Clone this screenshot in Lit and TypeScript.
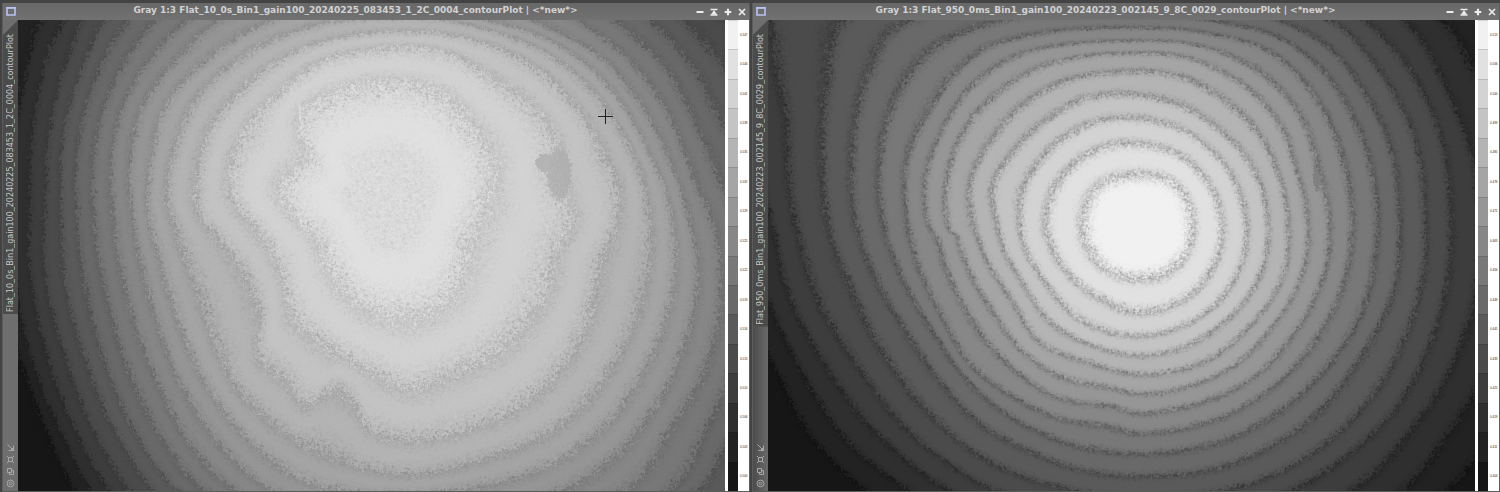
import { LitElement, html, css, svg } from "lit";
import { customElement, property } from "lit/decorators.js";

type Ring = number[][];

interface FieldSpec {
  // size of the grid in which the contour points are given
  grid: [number, number];
  center: [number, number];
  firstLevel: number;
  noise: number;
  lineWidth: number;
  lineDepth: number;
  coreDepth: number;
  seed: number;
  rings: Ring[];
  // darker patches: x, y, radius x, radius y, depth in gray values
  patches: number[][];
}

const SHADES = [241, 225, 211, 196, 180, 165, 150, 135, 120, 105, 90, 75, 61, 47, 34, 22];

const LEFT: FieldSpec = {
  grid: [1562, 1416],
  center: [820, 540],
  firstLevel: 1,
  noise: 0.19,
  lineWidth: 0.27,
  lineDepth: 26,
  coreDepth: 0.77,
  seed: 11,
  patches: [[1195, 465, 26, 75, 20], [1165, 435, 22, 28, 16]],
  rings: [
    [[830,190],[930,225],[1000,320],[1040,420],[1030,560],[990,680],[940,850],[850,900],[760,870],[710,790],[660,660],[600,580],[580,500],[640,420],[620,290],[700,220]],
    [[850,85],[940,100],[1060,190],[1150,290],[1190,390],[1180,430],[1200,530],[1225,600],[1190,700],[1160,830],[1080,970],[950,1070],[870,1110],[780,1060],[680,980],[610,900],[580,760],[530,640],[470,530],[470,450],[510,320],[580,220],[680,120],[760,95]],
    [[850,40],[960,50],[1110,120],[1210,230],[1290,400],[1325,500],[1320,620],[1280,750],[1260,900],[1200,1050],[1080,1190],[940,1250],[850,1265],[770,1225],[740,1140],[690,1110],[640,1165],[590,1080],[530,1010],[540,900],[500,760],[430,640],[400,600],[395,480],[420,340],[490,220],[560,140],[700,60]],
    [[830,-5],[1000,20],[1160,100],[1270,220],[1340,360],[1385,520],[1395,680],[1375,850],[1310,1050],[1200,1220],[1060,1310],[860,1370],[740,1340],[620,1270],[500,1140],[440,1000],[400,830],[350,640],[330,560],[350,370],[400,230],[500,110],[600,45]],
    [[830,-60],[1020,0],[1180,70],[1300,200],[1380,370],[1430,520],[1450,660],[1440,850],[1380,1060],[1290,1230],[1160,1350],[1000,1410],[860,1430],[650,1400],[510,1270],[420,1110],[360,940],[320,760],[290,620],[295,420],[330,250],[420,120],[520,30]],
    [[830,-120],[1140,10],[1290,120],[1380,270],[1440,430],[1480,600],[1500,760],[1470,980],[1400,1180],[1320,1310],[1200,1418],[860,1500],[560,1418],[440,1270],[360,1100],[300,880],[260,650],[245,450],[280,250],[360,110],[440,10]],
    [[830,-190],[1240,10],[1360,140],[1440,300],[1490,480],[1540,640],[1550,800],[1530,1000],[1440,1230],[1340,1418],[860,1580],[480,1418],[380,1280],[310,1100],[250,880],[215,650],[205,450],[235,250],[310,90],[370,10]],
    [[830,-260],[1320,10],[1430,150],[1500,330],[1560,520],[1610,800],[1530,1200],[1440,1418],[860,1660],[410,1418],[320,1270],[250,1080],[200,860],[170,640],[165,450],[195,250],[255,90],[300,10]],
    [[830,-330],[1400,10],[1490,150],[1560,330],[1680,800],[1560,1290],[1500,1418],[860,1740],[350,1418],[260,1250],[190,1030],[150,820],[130,600],[130,400],[160,220],[240,10]],
    [[830,-390],[1470,10],[1550,130],[1640,330],[1750,800],[1580,1418],[860,1820],[300,1418],[210,1230],[150,1030],[105,800],[95,580],[100,350],[140,150],[190,10]],
    [[830,-450],[1560,0],[1720,330],[1820,800],[1700,1418],[860,1900],[245,1418],[160,1220],[100,1000],[60,780],[60,550],[70,330],[110,120],[140,10]],
    [[830,-520],[1650,0],[1900,800],[1800,1418],[860,1980],[200,1418],[120,1220],[60,1000],[30,800],[25,550],[35,300],[100,10]],
    [[830,-590],[1750,0],[2000,800],[1900,1418],[860,2060],[160,1418],[90,1230],[20,980],[-10,750],[-20,500],[10,220],[50,10]],
    [[830,-660],[1850,0],[2100,800],[2000,1418],[860,2140],[125,1418],[60,1230],[5,1020],[-60,700],[-60,300],[-10,0]],
  ],
};

const RIGHT: FieldSpec = {
  grid: [1562, 1416],
  center: [820, 620],
  firstLevel: 0,
  noise: 0.13,
  lineWidth: 0.17,
  lineDepth: 58,
  coreDepth: 0.55,
  seed: 47,
  patches: [[1212, 470, 9, 50, 22]],
  rings: [
    [[820,468],[870,476],[905,505],[930,560],[937,620],[930,690],[900,745],[860,775],[820,782],[770,772],[730,740],[705,690],[695,620],[703,550],[730,500],[770,476]],
    [[810,375],[900,405],[975,500],[1003,620],[985,740],[925,840],[820,885],[720,830],[640,730],[612,600],[630,510],[680,430],[740,385]],
    [[800,298],[900,325],[990,410],[1040,520],[1057,640],[1035,770],[950,900],[820,955],[700,915],[610,790],[555,620],[560,520],[590,445],[660,350],[730,308]],
    [[800,228],[900,255],[1000,340],[1075,460],[1103,610],[1085,770],[1000,920],[900,995],[820,1013],[720,985],[630,920],[560,790],[505,620],[495,500],[540,400],[620,300],[700,240]],
    [[800,158],[900,170],[1000,235],[1090,360],[1130,480],[1148,620],[1130,800],[1060,930],[960,1035],[820,1070],[700,1030],[610,985],[540,850],[480,720],[450,600],[445,500],[490,370],[570,250],[660,185]],
    [[800,103],[920,115],[1040,190],[1130,320],[1165,450],[1190,600],[1175,780],[1110,930],[1010,1060],[900,1115],[820,1128],[740,1105],[660,1085],[570,1010],[500,890],[450,780],[418,655],[400,640],[395,480],[425,350],[500,230],[600,145],[700,112]],
    [[800,67],[940,78],[1060,140],[1160,260],[1215,450],[1240,620],[1220,800],[1160,950],[1060,1090],[940,1160],[820,1187],[760,1165],[640,1140],[520,1025],[430,860],[380,690],[350,600],[350,460],[390,320],[450,200],[560,105],[680,75]],
    [[780,28],[960,42],[1110,100],[1210,240],[1265,400],[1287,560],[1280,740],[1225,930],[1120,1100],[1000,1200],[820,1247],[750,1225],[640,1200],[530,1130],[450,1050],[380,890],[320,700],[303,560],[305,430],[350,290],[410,170],[480,90],[600,45]],
    [[780,-15],[1000,12],[1120,52],[1220,150],[1300,320],[1340,500],[1343,680],[1320,850],[1240,1040],[1130,1180],[1000,1270],[830,1308],[680,1285],[540,1200],[450,1100],[370,950],[300,790],[255,620],[245,440],[265,290],[320,150],[400,60],[500,12]],
    [[780,-70],[1000,-40],[1140,12],[1240,90],[1320,230],[1380,420],[1393,600],[1380,820],[1310,1010],[1230,1160],[1120,1280],[980,1355],[850,1375],[700,1360],[570,1295],[480,1230],[380,1090],[300,930],[230,760],[190,590],[185,400],[220,170],[280,25],[400,-30]],
    [[780,-130],[1100,-60],[1250,10],[1340,140],[1420,330],[1450,560],[1445,780],[1400,980],[1320,1160],[1200,1310],[1050,1405],[850,1440],[650,1412],[500,1340],[380,1220],[270,1040],[190,830],[140,660],[120,440],[130,200],[160,10],[300,-90]],
    [[780,-200],[1200,-80],[1320,10],[1420,160],[1480,330],[1505,560],[1500,780],[1460,980],[1380,1180],[1290,1300],[1150,1420],[850,1510],[500,1418],[350,1290],[200,1050],[110,850],[60,620],[40,300],[10,50],[0,-50]],
    [[780,-280],[1300,-100],[1410,10],[1500,220],[1560,440],[1575,650],[1550,900],[1480,1120],[1400,1270],[1290,1418],[850,1580],[400,1418],[250,1260],[130,1050],[50,850],[5,600],[-40,300],[-60,0]],
    [[780,-360],[1490,10],[1560,160],[1620,500],[1620,900],[1500,1250],[1400,1418],[850,1650],[310,1418],[180,1280],[80,1080],[10,880],[-60,500],[-100,0]],
    [[780,-440],[1600,0],[1700,500],[1650,1100],[1500,1418],[850,1720],[215,1418],[90,1250],[10,1040],[-120,600],[-150,0]],
  ],
};

const STEPS = 1440;

// radius of a closed ring for every direction, eased between the given points
function polar(ring: Ring, cx: number, cy: number): Float32Array {
  const pts = ring
    .map(([x, y]) => ({ a: Math.atan2(y - cy, x - cx), r: Math.hypot(x - cx, y - cy) }))
    .sort((p, q) => p.a - q.a);
  const n = pts.length;
  const at = (i: number) => {
    const turn = Math.floor(i / n);
    const p = pts[i - turn * n];
    return { a: p.a + turn * 2 * Math.PI, r: p.r };
  };
  const out = new Float32Array(STEPS + 1);
  for (let s = 0; s <= STEPS; s++) {
    const a = -Math.PI + (s / STEPS) * 2 * Math.PI;
    let i = -1;
    while (at(i + 1).a <= a) i++;
    const p0 = at(i - 1), p1 = at(i), p2 = at(i + 1), p3 = at(i + 2);
    const h = p2.a - p1.a || 1e-6;
    const t = (a - p1.a) / h;
    const m1 = ((p2.r - p0.r) / (p2.a - p0.a || 1e-6)) * h;
    const m2 = ((p3.r - p1.r) / (p3.a - p1.a || 1e-6)) * h;
    const t2 = t * t, t3 = t2 * t;
    out[s] = (2 * t3 - 3 * t2 + 1) * p1.r + (t3 - 2 * t2 + t) * m1 + (3 * t2 - 2 * t3) * p2.r + (t3 - t2) * m2;
  }
  return out;
}

// sensor grain: white noise softened over neighbouring pixels, about -1..1
function grain(w: number, h: number, rnd: () => number): Float32Array {
  const raw = new Float32Array(w * h);
  for (let i = 0; i < raw.length; i++) raw[i] = (rnd() + rnd() - 1) * 1.1;
  const out = new Float32Array(w * h);
  for (let y = 0; y < h; y++) {
    const up = Math.max(0, y - 1) * w, row = y * w, down = Math.min(h - 1, y + 1) * w;
    for (let x = 0; x < w; x++) {
      const l = Math.max(0, x - 1), r = Math.min(w - 1, x + 1);
      out[row + x] = raw[row + x] * 0.8 + (raw[row + l] + raw[row + r] + raw[up + x] + raw[down + x]) * 0.4;
    }
  }
  return out;
}

function paint(canvas: HTMLCanvasElement, spec: FieldSpec) {
  const w = (canvas.width = Math.max(1, canvas.clientWidth));
  const h = (canvas.height = Math.max(1, canvas.clientHeight));
  const ctx = canvas.getContext("2d")!;
  const image = ctx.createImageData(w, h);
  const [cx, cy] = spec.center;
  const radii = spec.rings.map((r) => polar(r, cx, cy));
  const count = radii.length;
  let state = spec.seed;
  const rnd = () => {
    state = (state + 0x6d2b79f5) | 0;
    let t = Math.imul(state ^ (state >>> 15), 1 | state);
    t = (t + Math.imul(t ^ (t >>> 7), 61 | t)) ^ t;
    return ((t ^ (t >>> 14)) >>> 0) / 4294967296;
  };
  const shift = grain(w, h, rnd);
  const speckle = grain(w, h, rnd);
  for (let y = 0; y < h; y++) {
    for (let x = 0; x < w; x++) {
      const gx = (x / w) * spec.grid[0];
      const gy = (y / h) * spec.grid[1] + 6;
      const r = Math.hypot(gx - cx, gy - cy);
      const s = Math.round(((Math.atan2(gy - cy, gx - cx) + Math.PI) / (2 * Math.PI)) * STEPS);
      let k = 0;
      while (k < count && radii[k][s] < r) k++;
      let u: number;
      if (k === 0) u = -Math.min(spec.coreDepth, (1 - r / radii[0][s]) * 1.3);
      else if (k === count) u = count - 1 + Math.min(0.5, (r - radii[count - 1][s]) / 60);
      else u = k - 1 + (r - radii[k - 1][s]) / (radii[k][s] - radii[k - 1][s]);
      const i = y * w + x;
      const v = u + shift[i] * spec.noise;
      const level = Math.max(0, Math.min(15, Math.floor(v) + 1 + spec.firstLevel));
      const near = u + shift[i] * spec.noise * 0.5;
      const d = (near - Math.round(near)) / spec.lineWidth;
      const base = SHADES[level];
      const mix = Math.max(0.1, Math.min(1.1, 0.6 + speckle[i] * 0.45));
      let g = base - Math.exp(-d * d) * mix * spec.lineDepth * (0.02 + (base / 255) * 1.1);
      for (const [px, py, rx, ry, depth] of spec.patches) {
        if (((gx - px) / rx) ** 2 + ((gy - py) / ry) ** 2 + shift[i] * 0.3 < 1) g = Math.min(g, 178 + depth * 0.1, base - depth);
      }
      const o = i * 4;
      image.data[o] = image.data[o + 1] = image.data[o + 2] = g;
      image.data[o + 3] = 255;
    }
  }
  ctx.putImageData(image, 0, 0);
}

@customElement("contour-field")
class ContourField extends LitElement {
  @property({ attribute: false }) spec!: FieldSpec;
  static styles = css`
    :host { display: block; min-width: 0; min-height: 0; overflow: hidden; background: #555; }
    canvas { display: block; width: 100%; height: 100%; }
  `;
  private watcher?: ResizeObserver;
  firstUpdated() {
    const canvas = this.renderRoot.querySelector("canvas")!;
    paint(canvas, this.spec);
    this.watcher = new ResizeObserver(() => {
      if (canvas.width !== canvas.clientWidth || canvas.height !== canvas.clientHeight) paint(canvas, this.spec);
    });
    this.watcher.observe(this);
  }
  disconnectedCallback() {
    super.disconnectedCallback();
    this.watcher?.disconnect();
  }
  render() {
    return html`<canvas role="img" aria-label="Contour plot"></canvas>`;
  }
}

const CONTROLS = [
  { label: "Iconize", icon: svg`<path d="M1.5 5h7" stroke-width="2"/>` },
  { label: "Shade", icon: svg`<path d="M1.500 2.500h7M1.500 8h7" stroke-width="1.300"/><path d="M5 3 8 7.500h-6z" fill="currentColor" stroke="none"/>` },
  { label: "Zoom", icon: svg`<path d="M1.700 5h6.600M5 1.700v6.600" stroke-width="2.200"/>` },
  { label: "Close", icon: svg`<path d="m2 2 6 6M8 2 2 8" stroke-width="1.700"/>` },
];

const TOOLS = [
  { label: "Fit view", icon: svg`<path d="M1.500 1.500 7 7M7.500 2.500v5h-5"/><path d="M7.500 4.500v3h-3z" fill="currentColor"/>` },
  { label: "Fit window", icon: svg`<path d="M2.500 2.500h4v4h-4zM1 1l1.500 1.500M8 1 6.500 2.500M1 8l1.500-1.500M8 8 6.500 6.500"/>` },
  { label: "Duplicate", icon: svg`<path d="M1.500 1.500h4v4h-4zM5.500 3.500h2v4h-4v-2"/>` },
  { label: "Track view", icon: svg`<circle cx="4.500" cy="4.500" r="3.400"/><circle cx="4.500" cy="4.500" r="1.300"/>` },
];

@customElement("image-window")
class ImageWindow extends LitElement {
  @property() name = "";
  @property({ type: Boolean, reflect: true }) active = false;
  @property({ type: Boolean }) cursor = false;
  @property({ attribute: false }) spec!: FieldSpec;
  @property({ attribute: false }) scale: string[] = [];
  static styles = css`
    :host {
      display: grid;
      grid-template-rows: 17px minmax(0, 1fr);
      min-width: 0;
      box-sizing: border-box;
      border: solid #5c5c5c;
      border-width: 0 1px 1px;
      background: #6f6f6f;
      color: #dcdcdc;
    }
    .bar { display: flex; align-items: flex-start; padding: 0 2px 0 3px; background: linear-gradient(#686868, #717171); }
    .badge { width: 10px; height: 10px; flex: none; margin-top: 3px; }
    h2 {
      flex: 1;
      min-width: 0;
      margin: 0;
      font: bold 9px/15px "DejaVu Sans", Verdana, sans-serif;
      text-align: center;
      white-space: nowrap;
      overflow: hidden;
      color: #d2d2d2;
    }
    .controls { display: flex; gap: 4px; padding-top: 4px; }
    button { display: block; width: 10px; height: 10px; padding: 0; border: 0; background: none; color: #ececec; }
    svg { display: block; fill: none; stroke: currentColor; }
    .body { display: grid; grid-template-columns: 15px minmax(0, 1fr) 24px; min-height: 0; }
    .side { display: flex; flex-direction: column; align-items: center; justify-content: space-between; min-height: 0; background: linear-gradient(90deg, #4c4c4c, #696969); }
    :host([active]) .side { background: #6e6e6e; }
    .corner { background: #6e6e6e; }
    .tab {
      box-sizing: border-box;
      width: 15px;
      padding: 14px 0 2px;
      background: #4b4b4b;
      clip-path: polygon(0 15px, 100% 0, 100% 100%, 0 100%);
      font: 8px/15px "DejaVu Sans", Verdana, sans-serif;
      color: #c8c8c8;
    }
    .tab span { display: block; writing-mode: vertical-rl; transform: rotate(180deg); white-space: nowrap; }
    .tools { display: flex; flex-direction: column; gap: 3px; padding-bottom: 3px; }
    .tools button { width: 9px; height: 9px; color: #a8a8a8; }
    .view { position: relative; display: grid; min-width: 0; min-height: 0; }
    .cross { position: absolute; left: 82%; top: 19%; width: 15px; height: 15px; color: #222; }
    .legend { display: grid; grid-auto-rows: minmax(0, 1fr); margin: 0; padding: 0 0 0 3px; list-style: none; background: #fff; }
    .legend li { display: grid; grid-template-columns: 10px 1fr; align-items: center; min-height: 0; font: 3px/4px "Liberation Sans", Arial, sans-serif; color: #222; }
    .legend i { height: 100%; box-sizing: border-box; border-top: 1px solid rgba(0, 0, 0, 0.12); }
    .legend span { padding-left: 2px; }
  `;
  render() {
    return html`
      <header class="bar">
        <svg class="badge" viewBox="0 0 10 10"><path d="M1 2h8v7H1z" stroke="#b9c3f2" stroke-width="1.600"/><path d="M0 1h10v1.500H0z" fill="#b9c3f2" stroke="none"/></svg>
        <h2>Gray 1:3 ${this.name} | &lt;*new*&gt;</h2>
        <div class="controls">
          ${CONTROLS.map((c) => html`<button aria-label=${c.label}><svg viewBox="0 0 10 10">${c.icon}</svg></button>`)}
        </div>
      </header>
      <div class="body">
        <aside class="side">
          <div class="corner"><div class="tab"><span>${this.name}</span></div></div>
          <div class="tools">
            ${TOOLS.map((t) => html`<button aria-label=${t.label}><svg viewBox="0 0 9 9">${t.icon}</svg></button>`)}
          </div>
        </aside>
        <div class="view">
          <contour-field .spec=${this.spec}></contour-field>
          ${this.cursor ? html`<svg class="cross" viewBox="0 0 15 15"><path d="M7.500 0v15M0 7.500h15"/></svg>` : null}
        </div>
        <ul class="legend">
          ${this.scale.map((s, i) => html`<li><i style="background:rgb(${SHADES[i]},${SHADES[i]},${SHADES[i]})"></i><span>${s}</span></li>`)}
        </ul>
      </div>
    `;
  }
}

@customElement("app-root")
class AppRoot extends LitElement {
  static styles = css`
    :host {
      display: grid;
      grid-template-columns: repeat(2, minmax(0, 1fr));
      gap: 2px;
      box-sizing: border-box;
      height: 100vh;
      padding: 3px 0 0 2px;
      background: #434343;
    }
  `;
  render() {
    return html`
      <image-window
        active
        cursor
        name="Flat_10_0s_Bin1_gain100_20240225_083453_1_2C_0004_contourPlot"
        .spec=${LEFT}
        .scale=${["0.547", "0.544", "0.541", "0.538", "0.535", "0.532", "0.529", "0.525", "0.522", "0.519", "0.516", "0.513", "0.510", "0.506", "0.503", "0.500"]}
      ></image-window>
      <image-window
        name="Flat_950_0ms_Bin1_gain100_20240223_002145_9_8C_0029_contourPlot"
        .spec=${RIGHT}
        .scale=${["0.513", "0.506", "0.500", "0.493", "0.485", "0.478", "0.471", "0.463", "0.456", "0.449", "0.441", "0.433", "0.425", "0.419", "0.411", "0.404"]}
      ></image-window>
    `;
  }
}
